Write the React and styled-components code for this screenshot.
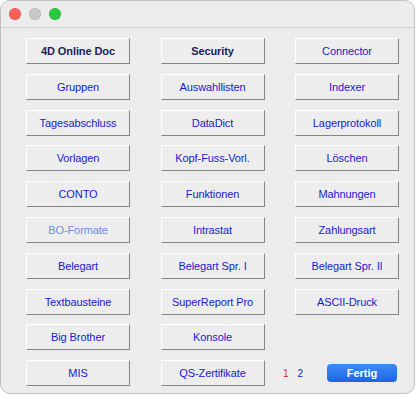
import React from "react";
import styled, { createGlobalStyle } from "styled-components";

const Global = createGlobalStyle`
  html, body { margin: 0; padding: 0; background: #ffffff; }
  body { font-family: "Liberation Sans", Arial, sans-serif; }
`;

const Window = styled.div`
  box-sizing: border-box;
  width: 415px;
  height: 394px;
  background: #ececec;
  border: 1px solid #c2c2c2;
  border-radius: 10px;
  overflow: hidden;
  display: flex;
  flex-direction: column;
`;

const TitleBar = styled.div`
  height: 26px;
  border-bottom: 1px solid #d2d2d2;
  display: flex;
  align-items: center;
  gap: 8px;
  padding-left: 8px;
  flex-shrink: 0;
`;

const Light = styled.span`
  width: 12px;
  height: 12px;
  border-radius: 50%;
  background: ${(p) => p.$c};
  box-shadow: inset 0 0 0 0.5px rgba(0, 0, 0, 0.15);
`;

const Grid = styled.div`
  display: grid;
  grid-template-columns: repeat(3, 104px);
  grid-auto-rows: 26px;
  column-gap: 30.5px;
  row-gap: 9.8px;
  padding: 10px 0 0 25px;
`;

const Btn = styled.div`
  box-sizing: border-box;
  display: flex;
  align-items: center;
  justify-content: center;
  background: #ededed;
  border-top: 1px solid #ffffff;
  border-left: 1px solid #ffffff;
  border-right: 1px solid #858585;
  border-bottom: 1px solid #858585;
  font-size: 11px;
  letter-spacing: -0.1px;
  white-space: nowrap;
  color: ${(p) => (p.$kind === "bold" ? "#1c1c5c" : p.$kind === "dim" ? "#6e8fd8" : "#1a1ad0")};
  font-weight: ${(p) => (p.$kind === "bold" ? 700 : 400)};
`;

const Footer = styled.div`
  display: flex;
  align-items: center;
  margin-left: -12px;
  margin-right: 2px;
  font-size: 10px;
`;

const Page = styled.span`
  color: ${(p) => p.$c};
  margin-right: ${(p) => p.$mr}px;
`;

const Done = styled.div`
  margin-left: auto;
  width: 70px;
  height: 18px;
  border-radius: 4px;
  background: linear-gradient(#3e89f7, #1c66e6);
  color: #ffffff;
  font-size: 11px;
  font-weight: 700;
  display: flex;
  align-items: center;
  justify-content: center;
`;

const items = [
  ["4D Online Doc", "bold"], ["Security", "bold"], ["Connector"],
  ["Gruppen"], ["Auswahllisten"], ["Indexer"],
  ["Tagesabschluss"], ["DataDict"], ["Lagerprotokoll"],
  ["Vorlagen"], ["Kopf-Fuss-Vorl."], ["Löschen"],
  ["CONTO"], ["Funktionen"], ["Mahnungen"],
  ["BO-Formate", "dim"], ["Intrastat"], ["Zahlungsart"],
  ["Belegart"], ["Belegart Spr. I"], ["Belegart Spr. II"],
  ["Textbausteine"], ["SuperReport Pro"], ["ASCII-Druck"],
  ["Big Brother"], ["Konsole"], [null],
  ["MIS"], ["QS-Zertifikate"],
];

export default function App() {
  return (
    <>
      <Global />
      <Window>
        <TitleBar>
          <Light $c="#fe5f57" />
          <Light $c="#c8c8c8" />
          <Light $c="#28c840" />
        </TitleBar>
        <Grid>
          {items.map(([label, kind], i) =>
            label ? (
              <Btn key={i} $kind={kind}>{label}</Btn>
            ) : (
              <div key={i} />
            )
          )}
          <Footer>
            <Page $c="#e02626" $mr={9}>1</Page>
            <Page $c="#1a1ad0" $mr={0}>2</Page>
            <Done>Fertig</Done>
          </Footer>
        </Grid>
      </Window>
    </>
  );
}
